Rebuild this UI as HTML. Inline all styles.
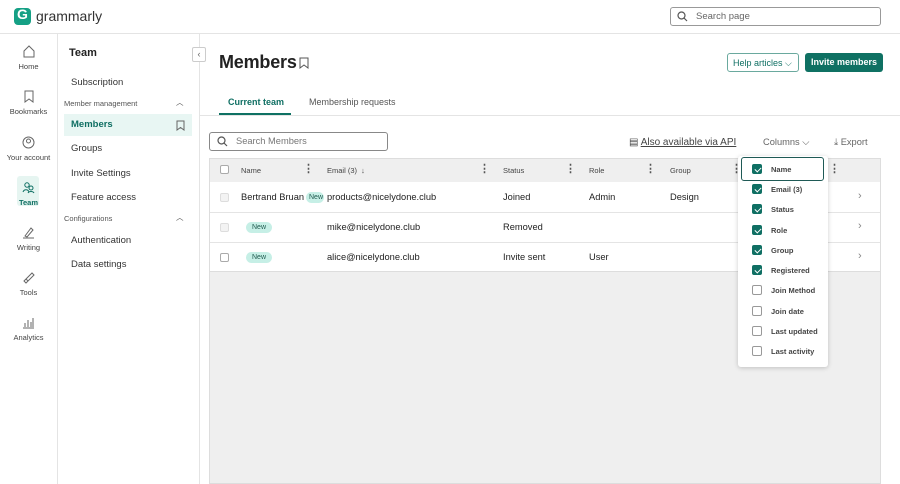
<!DOCTYPE html>
<html><head><style>
*{box-sizing:border-box;margin:0;padding:0}
body{width:900px;height:484px;overflow:hidden;background:#fff;font-family:"Liberation Sans",sans-serif;color:#222;position:relative}
.a{position:absolute}
.rail .it{position:absolute;left:0;width:57px;text-align:center;font-size:7.5px;color:#444}
.rail svg{display:block;margin:0 auto 4px}
.nav{font-size:9.5px;color:#333}
.sec{font-size:7.5px;color:#555}
.cb{position:absolute;width:9px;height:9px;border:1px solid #aaa;border-radius:2px;background:#fff}
.dots{position:absolute;font-size:11px;color:#555;font-weight:bold}
.hd{position:absolute;font-size:7.5px;color:#444;top:166px}
.cell{position:absolute;font-size:9.3px;color:#222}
.new{position:absolute;background:#c6efe6;color:#1f5a4f;font-size:7px;border-radius:7px;padding:2px 6px}
.dd .r{position:absolute;left:14px;font-size:7.5px;color:#444;font-weight:bold}
.dd .c{position:absolute;left:14px;width:10px;height:10px;border-radius:2px;border:1px solid #999;background:#fff}
.dd .c.on{background:#0f6f63;border-color:#0f6f63}
.dd .c.on:after{content:"";position:absolute;left:2.5px;top:1px;width:3px;height:5px;border:solid #fff;border-width:0 1.3px 1.3px 0;transform:rotate(45deg)}
</style></head><body>
<div class="a" style="left:0;top:0;width:900px;height:34px;border-bottom:1px solid #e4e4e4"></div>
<div class="a" style="left:14px;top:8px;width:17px;height:17px;border-radius:4px;background:#15a085"></div>
<div class="a" style="left:17px;top:6px;color:#fff;font-weight:bold;font-size:14px">G</div>
<div class="a" style="left:36px;top:8px;font-size:14px;color:#333">grammarly</div>
<div class="a" style="left:670px;top:7px;width:211px;height:19px;border:1px solid #999;border-radius:3px"></div>
<svg class="a" style="left:677px;top:11px" width="11" height="11"><circle cx="4.5" cy="4.5" r="3.5" fill="none" stroke="#555" stroke-width="1.2"/><path d="M7 7l3 3" stroke="#555" stroke-width="1.2"/></svg>
<div class="a" style="left:696px;top:11px;font-size:9.5px;color:#666">Search page</div>
<div class="a" style="left:57px;top:34px;width:1px;height:450px;background:#e4e4e4"></div>
<div class="rail">
<div class="it" style="top:45px"><svg width="12" height="13"><path d="M1 6L6 1l5 5v6H1z" fill="none" stroke="#666"/></svg>Home</div>
<div class="it" style="top:90px"><svg width="12" height="13"><path d="M2 1h8v11L6 9l-4 3z" fill="none" stroke="#666"/></svg>Bookmarks</div>
<div class="it" style="top:136px"><svg width="13" height="13"><circle cx="6.5" cy="6.5" r="5.5" fill="none" stroke="#666"/><circle cx="6.5" cy="5" r="2" fill="none" stroke="#666"/></svg>Your account</div>
<div class="a" style="left:17px;top:176px;width:22px;height:30px;background:#e6f5f1;border-radius:3px"></div>
<div class="it" style="top:181px;color:#0f6f63;font-weight:bold"><svg width="13" height="13"><circle cx="5" cy="4" r="2.2" fill="none" stroke="#0f6f63"/><circle cx="9" cy="7" r="2" fill="none" stroke="#0f6f63"/><path d="M1 11c1-3 5-3 6 0M6 12c1-2 5-2 6 0" fill="none" stroke="#0f6f63"/></svg>Team</div>
<div class="it" style="top:226px"><svg width="13" height="13"><path d="M3 10l6-8 2 2-6 7zM1 12h11" fill="none" stroke="#666"/></svg>Writing</div>
<div class="it" style="top:271px"><svg width="13" height="13"><path d="M2 10l8-8 2 2-8 8zM4 8l2 2" fill="none" stroke="#666"/></svg>Tools</div>
<div class="it" style="top:316px"><svg width="13" height="13"><path d="M1 12h11M3 11V7M6 11V4M9 11V6M11 11V2" fill="none" stroke="#666"/></svg>Analytics</div>
</div>
<div class="a" style="left:199px;top:34px;width:1px;height:450px;background:#e4e4e4"></div>
<div class="a" style="left:192px;top:47px;width:14px;height:15px;border:1px solid #ccc;background:#fff;border-radius:2px;font-size:9px;color:#666;text-align:center;line-height:13px">‹</div>
<div class="a" style="left:69px;top:47px;font-size:11px;font-weight:bold">Team</div>
<div class="a nav" style="left:71px;top:77px">Subscription</div>
<div class="a sec" style="left:64px;top:99px">Member management</div>
<div class="a sec" style="left:176px;top:97px">︿</div>
<div class="a" style="left:64px;top:114px;width:128px;height:22px;background:#e8f6f3"></div>
<div class="a nav" style="left:71px;top:119px;color:#0f6f63;font-weight:bold">Members</div>
<svg class="a" style="left:176px;top:120px" width="9" height="11"><path d="M1 1h7v9L4.5 7.5 1 10z" fill="none" stroke="#666"/></svg>
<div class="a nav" style="left:71px;top:143px">Groups</div>
<div class="a nav" style="left:71px;top:168px">Invite Settings</div>
<div class="a nav" style="left:71px;top:192px">Feature access</div>
<div class="a sec" style="left:64px;top:214px">Configurations</div>
<div class="a sec" style="left:176px;top:212px">︿</div>
<div class="a nav" style="left:71px;top:235px">Authentication</div>
<div class="a nav" style="left:71px;top:259px">Data settings</div>
<div class="a" style="left:219px;top:52px;font-size:18px;font-weight:bold;letter-spacing:-0.2px">Members</div>
<svg class="a" style="left:299px;top:57px" width="10" height="12"><path d="M1 1h8v10L5 8 1 11z" fill="none" stroke="#555"/></svg>
<div class="a" style="left:727px;top:53px;width:72px;height:19px;border:1px solid #6aa99e;border-radius:3px;font-size:9px;color:#0f6f63;padding:4px 0 0 5px">Help articles ⌵</div>
<div class="a" style="left:805px;top:53px;width:78px;height:19px;background:#0f7163;border-radius:3px;font-size:9px;color:#fff;font-weight:bold;text-align:center;line-height:19px">Invite members</div>
<div class="a" style="left:200px;top:115px;width:700px;height:1px;background:#e4e4e4"></div>
<div class="a" style="left:228px;top:97px;font-size:9px;color:#0f6f63;font-weight:bold">Current team</div>
<div class="a" style="left:219px;top:113px;width:72px;height:2px;background:#0f7163"></div>
<div class="a" style="left:309px;top:97px;font-size:9px;color:#555">Membership requests</div>
<div class="a" style="left:209px;top:132px;width:179px;height:19px;border:1px solid #888;border-radius:3px"></div>
<svg class="a" style="left:217px;top:136px" width="11" height="11"><circle cx="4.5" cy="4.5" r="3.5" fill="none" stroke="#555" stroke-width="1.2"/><path d="M7 7l3 3" stroke="#555" stroke-width="1.2"/></svg>
<div class="a" style="left:236px;top:136px;font-size:9.3px;color:#777">Search Members</div>
<div class="a" style="left:629px;top:137px;font-size:10px;color:#444">▤ <span style="text-decoration:underline">Also available via API</span></div>
<div class="a" style="left:763px;top:137px;font-size:9.3px;color:#666">Columns ⌵</div>
<div class="a" style="left:834px;top:137px;font-size:9.3px;color:#666">⤓ Export</div>
<div class="a" style="left:209px;top:158px;width:672px;height:326px;background:#efefef;border:1px solid #ddd"></div>
<div class="a" style="left:210px;top:182px;width:670px;height:89px;background:#fff"></div>
<div class="a" style="left:210px;top:212px;width:670px;height:1px;background:#e4e4e4"></div>
<div class="a" style="left:210px;top:242px;width:670px;height:1px;background:#e4e4e4"></div>
<div class="a" style="left:210px;top:271px;width:670px;height:1px;background:#ddd"></div>
<div class="cb" style="left:220px;top:165px"></div>
<div class="hd" style="left:241px">Name</div><div class="dots" style="left:303px;top:162px">⋮</div>
<div class="hd" style="left:327px">Email (3) &nbsp;↓</div><div class="dots" style="left:479px;top:162px">⋮</div>
<div class="hd" style="left:503px">Status</div><div class="dots" style="left:565px;top:162px">⋮</div>
<div class="hd" style="left:589px">Role</div><div class="dots" style="left:645px;top:162px">⋮</div>
<div class="hd" style="left:670px">Group</div><div class="dots" style="left:731px;top:162px">⋮</div>
<div class="dots" style="left:829px;top:162px">⋮</div>
<div class="cb" style="left:220px;top:193px;border-color:#ddd;background:#f3f3f3"></div>
<div class="cell" style="left:241px;top:192px">Bertrand Bruan</div>
<div class="new" style="left:306px;top:192px;width:18px;overflow:hidden;padding:2px 3px">New</div>
<div class="cell" style="left:327px;top:192px">products@nicelydone.club</div>
<div class="cell" style="left:503px;top:192px">Joined</div>
<div class="cell" style="left:589px;top:192px">Admin</div>
<div class="cell" style="left:670px;top:192px">Design</div>
<div class="cb" style="left:220px;top:223px;border-color:#ddd;background:#f3f3f3"></div>
<div class="new" style="left:246px;top:222px">New</div>
<div class="cell" style="left:327px;top:222px">mike@nicelydone.club</div>
<div class="cell" style="left:503px;top:222px">Removed</div>
<div class="cb" style="left:220px;top:253px"></div>
<div class="new" style="left:246px;top:252px">New</div>
<div class="cell" style="left:327px;top:252px">alice@nicelydone.club</div>
<div class="cell" style="left:503px;top:252px">Invite sent</div>
<div class="cell" style="left:589px;top:252px">User</div>
<div class="cell" style="left:858px;top:190px;color:#888;font-size:11px">›</div>
<div class="cell" style="left:858px;top:220px;color:#888;font-size:11px">›</div>
<div class="cell" style="left:858px;top:250px;color:#888;font-size:11px">›</div>
<div class="a dd" style="left:738px;top:156px;width:90px;height:211px;background:#fff;border-radius:3px;box-shadow:0 1px 5px rgba(0,0,0,.2)">
<div class="a" style="left:3px;top:1px;width:83px;height:24px;border:1.5px solid #1f5a56;border-radius:3px"></div>
<div class="c on" style="top:8px"></div><div class="r" style="top:9px;left:33px">Name</div>
<div class="c on" style="top:28px"></div><div class="r" style="top:29px;left:33px">Email (3)</div>
<div class="c on" style="top:48px"></div><div class="r" style="top:49px;left:33px">Status</div>
<div class="c on" style="top:69px"></div><div class="r" style="top:70px;left:33px">Role</div>
<div class="c on" style="top:89px"></div><div class="r" style="top:90px;left:33px">Group</div>
<div class="c on" style="top:109px"></div><div class="r" style="top:110px;left:33px">Registered</div>
<div class="c" style="top:129px"></div><div class="r" style="top:130px;left:33px">Join Method</div>
<div class="c" style="top:150px"></div><div class="r" style="top:151px;left:33px">Join date</div>
<div class="c" style="top:170px"></div><div class="r" style="top:171px;left:33px">Last updated</div>
<div class="c" style="top:190px"></div><div class="r" style="top:191px;left:33px">Last activity</div>
</div>
</body></html>
